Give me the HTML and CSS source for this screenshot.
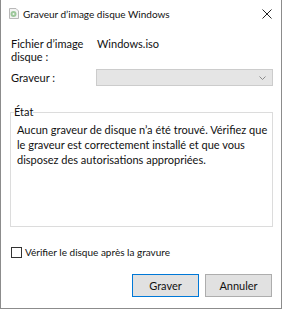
FILE: index.html
```html
<!DOCTYPE html>
<html lang="fr">
<head>
    <meta charset="UTF-8">
    <title>Graveur d'image disque Windows</title>
    <link rel="stylesheet" href="styles.css">
</head>
<body>
    <div class="window">
        <div class="titlebar">
            <svg class="app-icon" width="10" height="11" viewBox="0 0 10 11">
                <path d="M0.5 0.5 H7 L9.5 3 V10.5 H0.5 Z" fill="#f4f4f4" stroke="#b8b8b8"/>
                <circle cx="4.5" cy="6" r="3" fill="#9cc79a"/>
                <circle cx="4.5" cy="6" r="1" fill="#f4f4f4"/>
            </svg>
            <span class="title">Graveur d’image disque Windows</span>
            <svg class="close" width="10" height="10" viewBox="0 0 10 10">
                <path d="M0.5 0.5 L9.5 9.5 M9.5 0.5 L0.5 9.5" stroke="#222" stroke-width="1"/>
            </svg>
        </div>

        <div class="content">
            <div class="row file-row">
                <div class="label">Fichier d’image<br>disque :</div>
                <div class="value">Windows.iso</div>
            </div>
            <div class="row burner-row">
                <div class="label">Graveur :</div>
                <div class="select">
                    <svg width="7" height="4" viewBox="0 0 7 4">
                        <path d="M0.5 0.5 L3.5 3.5 L6.5 0.5" fill="none" stroke="#8a8a8a"/>
                    </svg>
                </div>
            </div>

            <fieldset class="status">
                <legend>État</legend>
                <p>Aucun graveur de disque n’a été trouvé. Vérifiez que le graveur est correctement installé et que vous disposez des autorisations appropriées.</p>
            </fieldset>

            <label class="check">
                <span class="box"></span>
                Vérifier le disque après la gravure
            </label>

            <div class="buttons">
                <button class="btn default">Graver</button>
                <button class="btn">Annuler</button>
            </div>
        </div>
    </div>
</body>
</html>
```

FILE: styles.css
```css
body {
    margin: 0;
    font-family: 'Lato', sans-serif;
    font-size: 11px;
    color: #111;
    background: #fff;
}
.window {
    box-sizing: border-box;
    width: 282px;
    height: 309px;
    border: 1px solid #8c8c8c;
    border-top: none;
    background: #fff;
}
.titlebar {
    display: flex;
    align-items: center;
    height: 27px;
    padding: 0 9px 0 8px;
}
.app-icon {
    margin-right: 4px;
}
.title {
    flex: 1;
    font-size: 10px;
}
.content {
    padding: 10px 8px 0 9px;
}
.row {
    display: flex;
    align-items: center;
}
.file-row {
    align-items: flex-start;
    line-height: 13px;
}
.label {
    width: 85px;
    padding-left: 1px;
}
.value {
    padding-left: 1px;
}
.burner-row {
    margin-top: 6px;
}
.select {
    flex: 1;
    box-sizing: border-box;
    height: 17px;
    background: #e5e5e5;
    border: 1px solid #cccccc;
    display: flex;
    align-items: center;
    justify-content: flex-end;
    padding-right: 6px;
}
.status {
    margin: 19px 0 0;
    padding: 0 3px;
    height: 120px;
    border: 1px solid #dcdcdc;
}
.status legend {
    padding: 0;
    line-height: 14px;
}
.status p {
    margin: 3px 0 0;
    padding-left: 3px;
    line-height: 15px;
}
.check {
    display: flex;
    align-items: center;
    margin-top: 18px;
    line-height: 14px;
    font-size: 10px;
}
.box {
    box-sizing: border-box;
    width: 11px;
    height: 11px;
    border: 1px solid #333;
    margin: 0 3px 0 1px;
}
.buttons {
    display: flex;
    justify-content: flex-end;
    gap: 6px;
    margin-top: 15px;
    padding-right: 1px;
}
.btn {
    box-sizing: border-box;
    width: 67px;
    height: 23px;
    background: #e1e1e1;
    border: 1px solid #adadad;
    font-family: inherit;
    font-size: 11px;
    color: #111;
    padding: 0;
}
.btn.default {
    border-color: #0078d7;
}
```
